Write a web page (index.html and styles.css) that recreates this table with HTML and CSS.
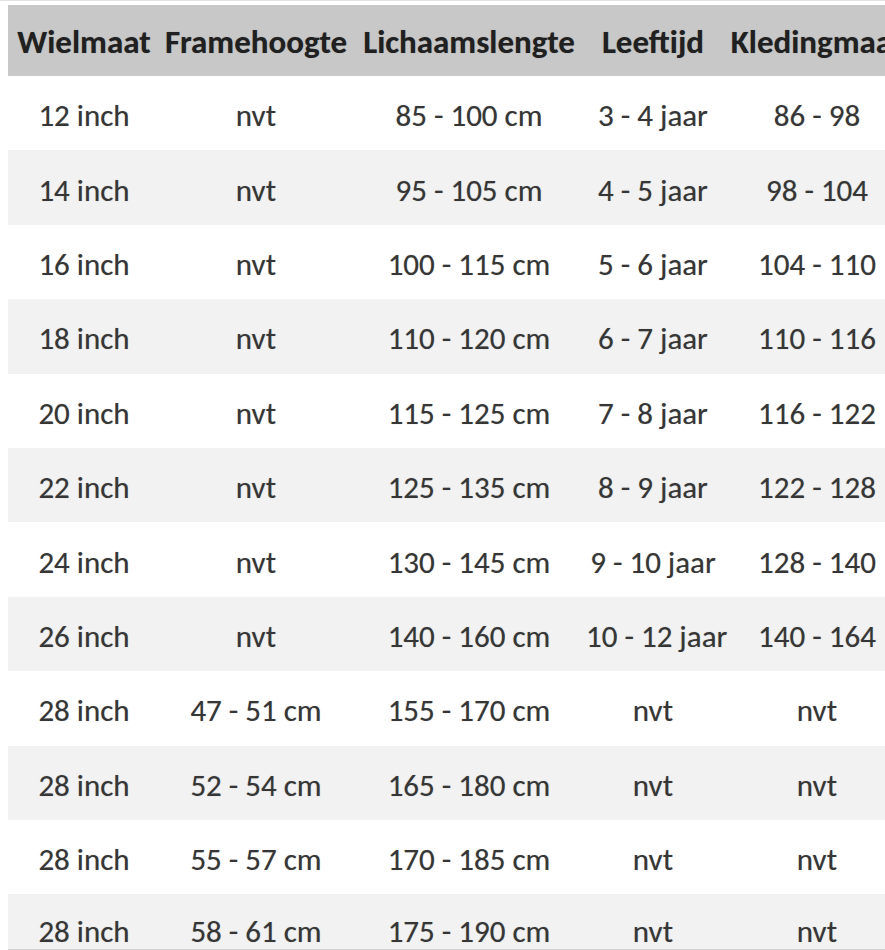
FILE: index.html
```html
<!DOCTYPE html>
<html lang="nl">
<head>
<meta charset="utf-8">
<title>Maattabel fietsen</title>
<link rel="stylesheet" href="styles.css">
</head>
<body>
<div class="sheet">
  <div class="row head">
    <div class="cell">Wielmaat</div>
    <div class="cell">Framehoogte</div>
    <div class="cell">Lichaamslengte</div>
    <div class="cell">Leeftijd</div>
    <div class="cell">Kledingmaat</div>
  </div>
  <div class="row"><div class="cell">12 inch</div><div class="cell">nvt</div><div class="cell">85 - 100 cm</div><div class="cell">3 - 4 jaar</div><div class="cell">86 - 98</div></div>
  <div class="row alt"><div class="cell">14 inch</div><div class="cell">nvt</div><div class="cell">95 - 105 cm</div><div class="cell">4 - 5 jaar</div><div class="cell">98 - 104</div></div>
  <div class="row"><div class="cell">16 inch</div><div class="cell">nvt</div><div class="cell">100 - 115 cm</div><div class="cell">5 - 6 jaar</div><div class="cell">104 - 110</div></div>
  <div class="row alt"><div class="cell">18 inch</div><div class="cell">nvt</div><div class="cell">110 - 120 cm</div><div class="cell">6 - 7 jaar</div><div class="cell">110 - 116</div></div>
  <div class="row"><div class="cell">20 inch</div><div class="cell">nvt</div><div class="cell">115 - 125 cm</div><div class="cell">7 - 8 jaar</div><div class="cell">116 - 122</div></div>
  <div class="row alt"><div class="cell">22 inch</div><div class="cell">nvt</div><div class="cell">125 - 135 cm</div><div class="cell">8 - 9 jaar</div><div class="cell">122 - 128</div></div>
  <div class="row"><div class="cell">24 inch</div><div class="cell">nvt</div><div class="cell">130 - 145 cm</div><div class="cell">9 - 10 jaar</div><div class="cell">128 - 140</div></div>
  <div class="row alt"><div class="cell">26 inch</div><div class="cell">nvt</div><div class="cell">140 - 160 cm</div><div class="cell">10 - 12 jaar</div><div class="cell">140 - 164</div></div>
  <div class="row"><div class="cell">28 inch</div><div class="cell">47 - 51 cm</div><div class="cell">155 - 170 cm</div><div class="cell">nvt</div><div class="cell">nvt</div></div>
  <div class="row alt"><div class="cell">28 inch</div><div class="cell">52 - 54 cm</div><div class="cell">165 - 180 cm</div><div class="cell">nvt</div><div class="cell">nvt</div></div>
  <div class="row"><div class="cell">28 inch</div><div class="cell">55 - 57 cm</div><div class="cell">170 - 185 cm</div><div class="cell">nvt</div><div class="cell">nvt</div></div>
  <div class="row alt last"><div class="cell">28 inch</div><div class="cell">58 - 61 cm</div><div class="cell">175 - 190 cm</div><div class="cell">nvt</div><div class="cell">nvt</div></div>
</div>
</body>
</html>
```
FILE: styles.css
```css
html, body {
  margin: 0;
  padding: 0;
  background: #ffffff;
  overflow: hidden;
}
body {
  width: 885px;
  height: 950px;
  font-family: Carlito, Calibri, "Open Sans", "Liberation Sans", sans-serif;
  color: #363636;
}
.sheet {
  padding-top: 4px;
  border-top: 1px solid #e2e2e2;
  padding-left: 8px;
  width: 910px;
}
.row {
  display: grid;
  grid-template-columns: 152px 192px 234px 134px 194px;
  height: 74.4px;
  align-items: center;
  font-size: 31px;
}
.row .cell {
  text-align: center;
  white-space: nowrap;
  padding-top: 4px;
  text-shadow: 0 0 1px rgba(40, 40, 40, 0.35);
}
.row.head {
  height: 71px;
  background: #c8c8c8;
  color: #202020;
  font-weight: bold;
  font-size: 33px;
}
.row.head .cell {
  padding-top: 2px;
}
.row.alt {
  background: #f2f2f2;
}
.row.last {
  height: 55px;
  border-bottom: 2px solid #d0d0d0;
  align-items: start;
}
.row.last .cell {
  padding-top: 18px;
}
```
